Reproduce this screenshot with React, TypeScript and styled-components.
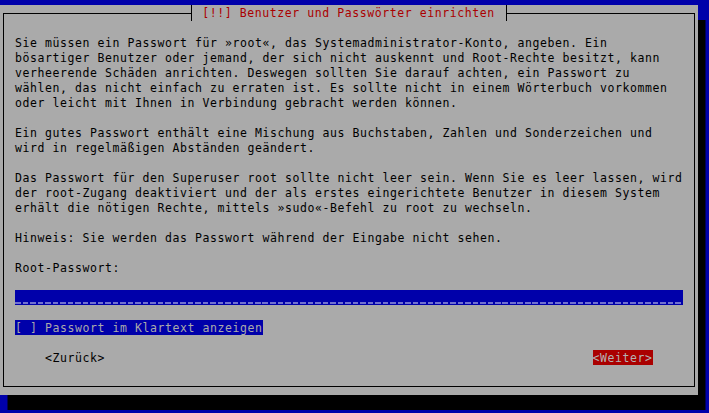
import React from "react";
import styled, { createGlobalStyle, css } from "styled-components";

const GlobalStyle = createGlobalStyle`
  html, body { margin: 0; padding: 0; background: #0000aa; }
  #root { width: 709px; height: 413px; }
`;

const cellText = css`
  box-sizing: border-box;
  height: 15px;
  padding-top: 2px;
  line-height: 13px;
  white-space: pre;
`;

const Screen = styled.div`
  box-sizing: border-box;
  width: 709px;
  height: 413px;
  overflow: hidden;
  background: #0000aa;
  padding-top: 5px;
  font-family: "DejaVu Sans Mono", "Liberation Mono", monospace;
  font-size: 11.5px;
  letter-spacing: 0.5764px;
  color: #000;
`;

const Dialog = styled.div`
  box-sizing: border-box;
  width: 697.5px;
  height: 390px;
  background: #aaaaaa;
  box-shadow: 7.5px 15px 0 #000;
  padding: 0 2.5px 8px 3px;
`;

const Frame = styled.fieldset`
  box-sizing: border-box;
  height: 100%;
  margin: 0;
  min-inline-size: 0;
  border: 1px solid #000;
  padding: 14px 11.5px 21px 11px;
  display: flex;
  flex-direction: column;
  gap: 15px;
`;

const Title = styled.legend`
  ${cellText}
  height: 16px;
  margin: 0 auto;
  padding: 2px 11px 0 10.5px;
  border-left: 1px solid #000;
  border-right: 1px solid #000;
  color: #aa0000;
`;

const Paragraph = styled.div`
  display: flex;
  flex-direction: column;
`;

const Line = styled.div`
  ${cellText}
`;

const Entry = styled.div`
  height: 15px;
  background-color: #0000aa;
  background-image: repeating-linear-gradient(
    90deg,
    #7070d0 0 5.5px,
    transparent 5.5px 7.5px
  );
  background-repeat: no-repeat;
  background-size: 100% 2px;
  background-position: 0 12px;
`;

const Row = styled.div`
  display: flex;
  height: 15px;
`;

const Checkbox = styled.span`
  ${cellText}
  background: #0000aa;
  color: #aaaaaa;
`;

const ButtonRow = styled.div`
  display: flex;
  justify-content: space-between;
  height: 15px;
  padding: 0 30px;
`;

const Button = styled.span<{ $active?: boolean }>`
  ${cellText}
  background: ${(p) => (p.$active ? "#aa0000" : "transparent")};
  color: ${(p) => (p.$active ? "#b4b4b4" : "#000")};
`;

const para1 = [
  "Sie müssen ein Passwort für »root«, das Systemadministrator-Konto, angeben. Ein",
  "bösartiger Benutzer oder jemand, der sich nicht auskennt und Root-Rechte besitzt, kann",
  "verheerende Schäden anrichten. Deswegen sollten Sie darauf achten, ein Passwort zu",
  "wählen, das nicht einfach zu erraten ist. Es sollte nicht in einem Wörterbuch vorkommen",
  "oder leicht mit Ihnen in Verbindung gebracht werden können.",
];

const para2 = [
  "Ein gutes Passwort enthält eine Mischung aus Buchstaben, Zahlen und Sonderzeichen und",
  "wird in regelmäßigen Abständen geändert.",
];

const para3 = [
  "Das Passwort für den Superuser root sollte nicht leer sein. Wenn Sie es leer lassen, wird",
  "der root-Zugang deaktiviert und der als erstes eingerichtete Benutzer in diesem System",
  "erhält die nötigen Rechte, mittels »sudo«-Befehl zu root zu wechseln.",
];

const Lines = ({ lines }: { lines: string[] }) => (
  <Paragraph>
    {lines.map((l, i) => (
      <Line key={i}>{l}</Line>
    ))}
  </Paragraph>
);

export default function App() {
  return (
    <>
      <GlobalStyle />
      <Screen>
        <Dialog>
          <Frame>
            <Title>[!!] Benutzer und Passwörter einrichten</Title>
            <Lines lines={para1} />
            <Lines lines={para2} />
            <Lines lines={para3} />
            <Line>Hinweis: Sie werden das Passwort während der Eingabe nicht sehen.</Line>
            <Line>Root-Passwort:</Line>
            <Entry />
            <Row>
              <Checkbox>[ ] Passwort im Klartext anzeigen</Checkbox>
            </Row>
            <ButtonRow>
              <Button>&lt;Zurück&gt;</Button>
              <Button $active>&lt;Weiter&gt;</Button>
            </ButtonRow>
          </Frame>
        </Dialog>
      </Screen>
    </>
  );
}
